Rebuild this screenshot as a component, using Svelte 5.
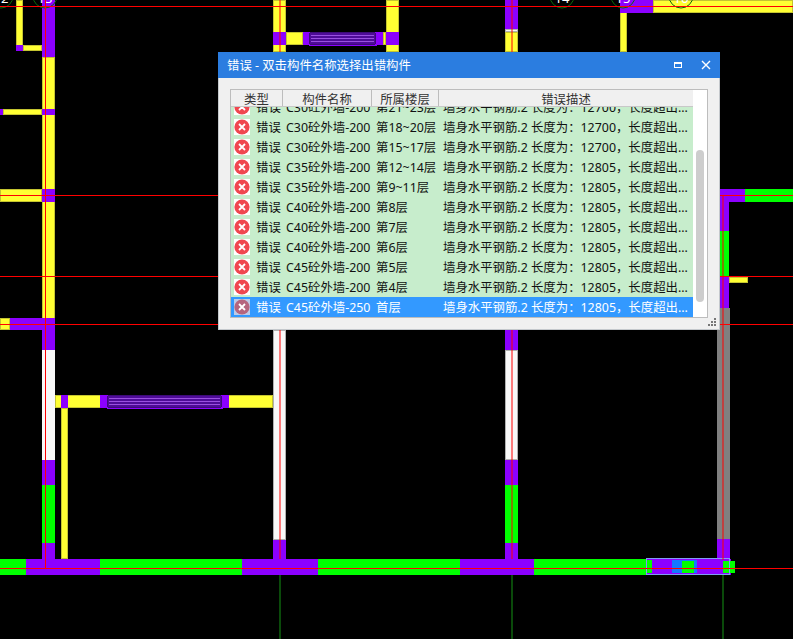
<script>
    // cad drawing behind the dialog: [class, x, y, w, h]
    const walls = [
        ['y', 16, 0, 7, 51], ['p', 16, 45, 7, 6], ['y', 23, 45, 19, 6],
        ['y', 42, 57, 13, 303], ['p', 42, 0, 13, 57],
        ['p', 0, 109, 3, 6], ['y', 3, 109, 39, 6], ['p', 42, 109, 13, 6],
        ['y', 0, 189, 42, 13], ['p', 42, 189, 13, 13],
        ['y', 0, 318, 10, 12], ['p', 10, 318, 45, 12], ['p', 42, 330, 13, 20],
        ['wl', 42, 350, 13, 110], ['p', 42, 460, 13, 25], ['g', 42, 485, 13, 58], ['p', 42, 543, 13, 17],

        ['y', 55, 395, 218, 13], ['p', 61, 395, 7, 13], ['p', 100, 395, 7, 13], ['p', 222, 395, 7, 13],
        ['y', 61, 408, 7, 151],

        ['y', 273, 0, 13, 52], ['p', 273, 32, 13, 13], ['y', 286, 32, 17, 13], ['p', 303, 32, 7, 13],
        ['p', 376, 32, 7, 13], ['y', 383, 32, 3, 13],
        ['y', 386, 0, 13, 52], ['p', 386, 32, 13, 13],
        ['w', 273, 330, 13, 210], ['p', 273, 540, 13, 20],

        ['p', 505, 0, 13, 29], ['w', 505, 29, 13, 3], ['y', 505, 32, 13, 20],
        ['p', 505, 330, 13, 20], ['w', 505, 350, 13, 110], ['p', 505, 460, 13, 25],
        ['g', 505, 485, 13, 58], ['p', 505, 543, 13, 17],

        ['y', 620, 12, 7, 40], ['p', 620, 0, 33, 13], ['y', 653, 0, 140, 13],

        ['p', 720, 189, 25, 13], ['g', 745, 189, 48, 13], ['p', 720, 202, 9, 29],
        ['g', 720, 231, 9, 45], ['p', 720, 276, 9, 32], ['y', 729, 277, 19, 6],
        ['n', 717, 308, 13, 231], ['p', 717, 539, 13, 21],

        ['g', 0, 559, 26, 16], ['p', 26, 559, 74, 16], ['g', 100, 559, 142, 16],
        ['p', 242, 559, 76, 16], ['g', 318, 559, 142, 16], ['p', 460, 559, 74, 16],
        ['g', 534, 559, 112, 16]
    ]

    const hatches = [
        { x: 107, y: 395, w: 115 },
        { x: 309, y: 32, w: 67 }
    ]

    const bubbles = [
        { x: 1, label: '12' }, { x: 45, label: '13' },
        { x: 562, label: '14' }, { x: 623, label: '15' }, { x: 681, label: '16' }
    ]

    const desc_12700 = '墙身水平钢筋.2 长度为：12700，长度超出...'
    const desc_12805 = '墙身水平钢筋.2 长度为：12805，长度超出...'

    const rows = [
        { name: 'C30砼外墙-200', floor: '第21~23层', desc: desc_12700 },
        { name: 'C30砼外墙-200', floor: '第18~20层', desc: desc_12700 },
        { name: 'C30砼外墙-200', floor: '第15~17层', desc: desc_12700 },
        { name: 'C35砼外墙-200', floor: '第12~14层', desc: desc_12805 },
        { name: 'C35砼外墙-200', floor: '第9~11层', desc: desc_12805 },
        { name: 'C40砼外墙-200', floor: '第8层', desc: desc_12805 },
        { name: 'C40砼外墙-200', floor: '第7层', desc: desc_12805 },
        { name: 'C40砼外墙-200', floor: '第6层', desc: desc_12805 },
        { name: 'C45砼外墙-200', floor: '第5层', desc: desc_12805 },
        { name: 'C45砼外墙-200', floor: '第4层', desc: desc_12805 },
        { name: 'C45砼外墙-250', floor: '首层', desc: desc_12805, selected: true }
    ]
</script>

<div class="page">
    <svg class="cad" width="793" height="639" viewBox="0 0 793 639">
        {#each walls as [kind, x, y, w, h]}
            <rect class={kind} x={x + 0.5} y={y + 0.5} width={w - 1} height={h - 1} />
        {/each}

        {#each hatches as h}
            <rect class="p" x={h.x} y={h.y} width={h.w} height="13" />
            <rect class="hatch" x={h.x + 0.5} y={h.y + 0.5} width={h.w - 1} height="12" rx="2" />
            <rect class="hatch-line" x={h.x + 2} y={h.y + 3} width={h.w - 4} height="1" />
            <rect class="hatch-line" x={h.x + 2} y={h.y + 6} width={h.w - 4} height="1" />
            <rect class="hatch-line" x={h.x + 2} y={h.y + 9} width={h.w - 4} height="1" />
        {/each}

        <!-- selected wall piece, bottom right -->
        <rect class="p" x="646" y="559" width="84" height="15" />
        <rect x="672" y="560" width="25" height="13" fill="#1478ff" />
        <rect x="646" y="560" width="6" height="13" fill="#00ff00" />
        <rect x="682" y="561" width="12" height="12" fill="#00ff00" />
        <rect x="723" y="561" width="12" height="12" fill="#00ff00" />
        <rect class="sel" x="646.5" y="558.5" width="83" height="16" rx="1" />

        <!-- axis lines -->
        <rect class="axis" x="279" y="575" width="2" height="64" />
        <rect class="axis" x="511" y="575" width="2" height="64" />
        <rect class="axis" x="722" y="575" width="2" height="64" />
        {#each bubbles as b}
            <circle class="bubble" cx={b.x} cy="-4" r="12" />
            <text class="bubble-text" x={b.x} y="3">{b.label}</text>
        {/each}

        <rect class="red" x="0" y="6" width="793" height="1" />
        <rect class="red" x="0" y="195" width="793" height="1" />
        <rect class="red" x="0" y="276" width="793" height="1" />
        <rect class="red" x="0" y="324" width="793" height="1" />
        <rect class="red" x="0" y="568" width="793" height="1" />
        <rect class="red" x="45" y="0" width="1" height="568" />
        <rect class="pink" x="279" y="0" width="2" height="559" />
        <rect class="pink" x="511" y="0" width="2" height="559" />
        <rect class="pink" x="722" y="195" width="2" height="365" />
    </svg>

    <div class="dialog">
        <div class="titlebar">
            <span class="title">错误 - 双击构件名称选择出错构件</span>
            <svg class="win-btn" width="10" height="10" viewBox="0 0 10 10">
                <rect x="1.5" y="2.5" width="7" height="5" fill="none" stroke="#fff" />
                <rect x="1" y="2" width="8" height="2" fill="#fff" />
            </svg>
            <svg class="win-btn close" width="10" height="10" viewBox="0 0 10 10">
                <path d="M1 1 L9 9 M9 1 L1 9" stroke="#fff" stroke-width="1.4" fill="none" />
            </svg>
        </div>

        <div class="frame">
            <div class="table">
                <div class="head">
                    <div class="th c-type">类型</div>
                    <div class="th c-name">构件名称</div>
                    <div class="th c-floor">所属楼层</div>
                    <div class="th c-desc">错误描述</div>
                </div>
                <div class="body">
                    <div class="list">
                        {#each rows as row}
                            <div class="row" class:selected={row.selected}>
                                <div class="c-type type-cell">
                                    <svg class="err" width="16" height="16" viewBox="0 0 16 16">
                                        <rect class="err-bg" width="16" height="16" />
                                        <circle class="err-dot" cx="8" cy="8" r="7.6" />
                                        <path d="M5 5 L11 11 M11 5 L5 11" stroke="#fff" stroke-width="1.8" fill="none" />
                                    </svg>
                                    <span>错误</span>
                                </div>
                                <div class="c-name cell name-cell">{row.name}</div>
                                <div class="c-floor cell">{row.floor}</div>
                                <div class="c-desc cell">{row.desc}</div>
                            </div>
                        {/each}
                    </div>
                </div>
            </div>
            <div class="scrollbar">
                <div class="thumb"></div>
            </div>
        </div>

        <div class="footer">
            <svg width="9" height="9" viewBox="0 0 9 9">
                <g fill="#777">
                    <rect x="6" y="0" width="2" height="2" />
                    <rect x="3" y="3" width="2" height="2" />
                    <rect x="6" y="3" width="2" height="2" />
                    <rect x="0" y="6" width="2" height="2" />
                    <rect x="3" y="6" width="2" height="2" />
                    <rect x="6" y="6" width="2" height="2" />
                </g>
            </svg>
        </div>
    </div>
</div>

<style>
    :global(body) {
        background-color: #000;
    }

    .page {
        position: relative;
        width: 793px;
        height: 639px;
        overflow: hidden;
        background-color: #000;
        font-family: "Noto Sans", "Noto Sans CJK SC", sans-serif;
    }

    .cad {
        display: block;
    }

    .cad rect {
        shape-rendering: crispEdges;
    }

    .y { fill: #ffff33; stroke: #c4c430; }
    .p { fill: #8c00ff; stroke: #8c00ff; }
    .g { fill: #00ff00; stroke: #00ff00; }
    .w { fill: #f8f8f8; stroke: #b0b0b0; }
    .wl { fill: #f8f8f8; stroke: #f8f8f8; }
    .n { fill: #808080; stroke: #808080; }
    .hatch { fill: #4f0c98; stroke: #3d0a78; }
    .hatch-line { fill: #9a50e0; }
    .sel { fill: none; stroke: #7f9cf5; }
    .axis { fill: #0a4a0a; }
    .red { fill: #ff0000; }
    .pink { fill: #ff0000; opacity: 0.5; }

    .bubble {
        fill: none;
        stroke: #0a6a0a;
    }

    .bubble-text {
        fill: #fff;
        font-size: 13px;
        text-anchor: middle;
    }

    .dialog {
        position: absolute;
        left: 218px;
        top: 52px;
        width: 502px;
        height: 278px;
        box-sizing: border-box;
        display: flex;
        flex-direction: column;
        background-color: #f0f0f0;
        border: 1px solid #c4c8cc;
        border-top: none;
    }

    .titlebar {
        height: 27px;
        margin: 0 -1px;
        padding: 0 9px 0 9px;
        display: flex;
        align-items: center;
        background-color: #2b7de0;
        color: #fff;
        font-size: 12.4px;
    }

    .title {
        flex: 1;
    }

    .win-btn {
        margin-left: 18px;
    }

    .frame {
        display: flex;
        height: 228px;
        margin: 11px 11px 0 11px;
        border: 1px solid #bdbdbd;
        background-color: #fff;
    }

    .table {
        width: 462px;
        display: flex;
        flex-direction: column;
        font-size: 12.4px;
    }

    .head {
        display: flex;
        height: 16px;
        flex-shrink: 0;
        background-color: #f0f0f0;
        border-bottom: 1px solid #c8c8c8;
        color: #333;
    }

    .th {
        box-sizing: border-box;
        border-right: 1px solid #bdbdbd;
        text-align: center;
        line-height: 20px;
        height: 16px;
        overflow: hidden;
    }

    .th.c-desc {
        border-right: none;
    }

    .c-type { width: 52px; flex-shrink: 0; }
    .c-name { width: 89px; flex-shrink: 0; }
    .c-floor { width: 67px; flex-shrink: 0; }
    .c-desc { flex: 1; }

    .body {
        height: 210px;
        overflow: hidden;
    }

    .list {
        margin-top: -10px;
    }

    .row {
        display: flex;
        height: 20px;
        line-height: 22px;
        background-color: #c7edcc;
        color: #111;
        white-space: nowrap;
    }

    .row.selected {
        background-color: #3399ff;
        color: #fff;
    }

    .type-cell {
        display: flex;
        align-items: flex-start;
        padding-left: 3px;
        padding-top: 2px;
        box-sizing: border-box;
    }

    .type-cell span {
        margin-left: 6px;
        margin-top: -2px;
    }

    .cell {
        padding-left: 4px;
        box-sizing: border-box;
    }

    .name-cell {
        padding-left: 3px;
    }

    .err {
        flex-shrink: 0;
    }

    .err-bg { fill: #fff; }
    .err-dot { fill: #f0474f; }

    .selected .err-bg { fill: #bccbe8; }
    .selected .err-dot { fill: #b5657e; }

    .scrollbar {
        flex: 1;
        padding-top: 60px;
        display: flex;
        justify-content: center;
    }

    .thumb {
        width: 8px;
        height: 152px;
        border-radius: 4px;
        background-color: #cdcdcd;
    }

    .footer {
        flex: 1;
        display: flex;
        justify-content: flex-end;
        align-items: flex-end;
        padding: 0 2px 2px 0;
    }
</style>
